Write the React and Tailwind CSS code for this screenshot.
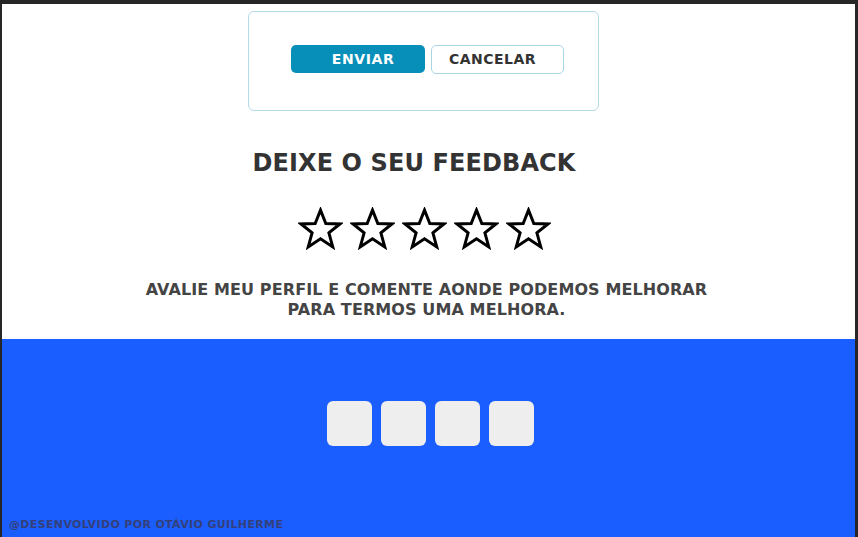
import React from 'react';

const Star = () => (
    <svg width="45" height="43" viewBox="0 0 44 42">
        <polygon
            points="22,3 27.2,16.2 41,16.6 30.2,25.2 34,39 22,31 10,39 13.8,25.2 3,16.6 16.8,16.2"
            fill="none"
            stroke="#000"
            strokeWidth="2.9"
            strokeLinejoin="miter"
        />
    </svg>
);

export default function App() {
    return (
        <div className="h-[537px] w-[858px] bg-[#262626] pt-[4px] pl-[2px] pr-[3px] flex flex-col font-['DejaVu_Sans',sans-serif]">
            {/* White section */}
            <div className="h-[335px] bg-white flex flex-col">
                <div className="mt-[7px] ml-[246px] w-[351px] h-[100px] border border-[#b3dbe8] rounded-[6px] pt-[33px] pl-[42px] flex gap-[6px]">
                    <button className="w-[134px] h-[28px] pl-[10px] bg-[#078fba] rounded-[5px] text-white font-bold text-[14px] tracking-[0.6px]">
                        ENVIAR
                    </button>
                    <button className="w-[133px] h-[29px] pr-[10px] bg-white border border-[#a9d6e5] rounded-[5px] text-[#333] font-bold text-[14px] tracking-[0.5px]">
                        CANCELAR
                    </button>
                </div>

                <h1 className="mt-[37px] pr-[29px] text-center text-[24px] leading-[30px] font-bold tracking-[0.1px] text-[#333]">
                    DEIXE O SEU FEEDBACK
                </h1>

                <div className="mt-[29px] pr-[8px] flex justify-center gap-[7px]">
                    <Star />
                    <Star />
                    <Star />
                    <Star />
                    <Star />
                </div>

                <p className="mt-[30px] pr-[4px] text-center text-[16px] leading-[20px] font-bold tracking-[0.1px] text-[#444]">
                    AVALIE MEU PERFIL E COMENTE AONDE PODEMOS MELHORAR
                    <br />
                    PARA TERMOS UMA MELHORA.
                </p>
            </div>

            {/* Blue section */}
            <div className="flex-1 bg-[#1b5eff] flex flex-col">
                <div className="mt-[62px] pl-[4px] flex justify-center gap-[9px]">
                    <div className="w-[45px] h-[45px] rounded-[6px] bg-[#eeeeee]" />
                    <div className="w-[45px] h-[45px] rounded-[6px] bg-[#eeeeee]" />
                    <div className="w-[45px] h-[45px] rounded-[6px] bg-[#eeeeee]" />
                    <div className="w-[45px] h-[45px] rounded-[6px] bg-[#eeeeee]" />
                </div>
                <p className="mt-auto mb-[5px] ml-[7px] text-[11px] leading-[14px] font-bold tracking-[0.35px] text-[#34407a]">
                    @DESENVOLVIDO POR OTÁVIO GUILHERME
                </p>
            </div>
        </div>
    );
}
